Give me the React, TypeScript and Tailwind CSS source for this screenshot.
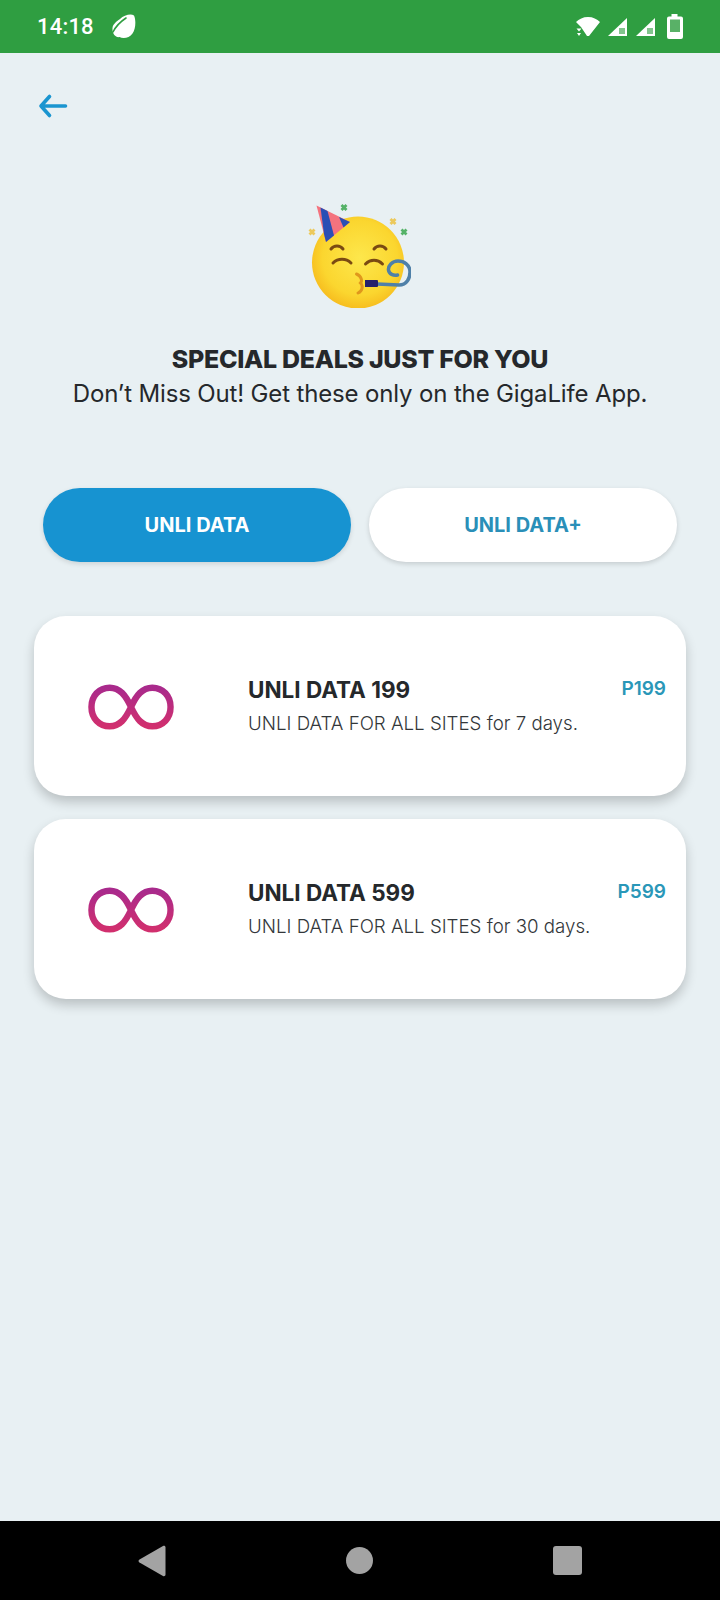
import React from "react";

const plans = [
  { name: "UNLI DATA 199", desc: "UNLI DATA FOR ALL SITES for 7 days.", price: "P199" },
  { name: "UNLI DATA 599", desc: "UNLI DATA FOR ALL SITES for 30 days.", price: "P599" },
];

function StatusBar() {
  return (
    <div className="h-[53px] bg-[#2f9e41] flex items-center justify-between pl-[37px] pr-[36px] text-white">
      <div className="flex items-center gap-[18px]">
        <span className="text-[22px] font-medium font-['Roboto',sans-serif] tracking-[0.2px]">14:18</span>
        <svg width="24" height="25" viewBox="0 0 24 25">
          <path d="M8 5C12 1 19-.5 22 1.500c2 4 2 13-1.500 18C17.500 24 11 25 7.500 23 4 24 0 20 .5 14 1 10 4 8 8 5Z" fill="white" />
          <path d="M1 18C4 12 8 8 14 4" fill="none" stroke="#2f9e41" strokeWidth="1.600" strokeLinecap="round" />
        </svg>
      </div>
      <div className="flex items-center gap-[7px]">
        <svg width="24" height="20" viewBox="0 0 24 20" fill="white">
          <path d="M0 5C3 2 7 0 12 0s9 2 12 5L13 19h-2l-2-3-4-6Z" />
          <path d="M0 11h6l-3 3.500ZM.5 15h5l-2.500 4Z" fill="#2f9e41" />
          <path d="M.5 11.500h5L3 14.500ZM1 16h4l-2 3Z" />
        </svg>
        <svg width="21" height="20" viewBox="0 0 21 20">
          <path d="M20 1v18H1Z" fill="white" />
          <path d="M12 11h6v6h-6Z" fill="#2f9e41" opacity=".6" />
        </svg>
        <svg width="21" height="20" viewBox="0 0 21 20">
          <path d="M20 1v18H1Z" fill="white" />
          <path d="M12 11h6v6h-6Z" fill="#2f9e41" opacity=".6" />
        </svg>
        <svg width="18" height="25" viewBox="0 0 18 25" className="ml-[3px]">
          <path d="M5.500 0h6v2.500H15a2 2 0 0 1 2 2V23a2 2 0 0 1-2 2H3a2 2 0 0 1-2-2V4.500a2 2 0 0 1 2-2h2.500Z" fill="white" />
          <path d="M4 5.500h10V18H4Z" fill="#2f9e41" opacity=".8" />
        </svg>
      </div>
    </div>
  );
}

function PartyFace() {
  return (
    <svg width="106" height="108" viewBox="0 0 106 108">
      <defs>
        <radialGradient id="faceFill" cx="52%" cy="45%" r="58%">
          <stop offset="0%" stopColor="#fde74c" />
          <stop offset="70%" stopColor="#fbd62f" />
          <stop offset="100%" stopColor="#f6b91c" />
        </radialGradient>
      </defs>
      <circle cx="53" cy="62.500" r="46" fill="url(#faceFill)" />
      {/* hat */}
      <path d="M11.500 5.500 45 22 21 42Z" fill="#f4737e" />
      <path d="M15.500 7.500 22.500 11 29 35.500 21 42 19 34Z" fill="#2a4fb5" />
      <path d="M34 17 45 22 38.500 27.500Z" fill="#2a4fb5" />
      {/* confetti */}
      <g fill="none" strokeWidth="2.800">
        <path d="M36.500 5l5 5M41.500 5l-5 5" stroke="#54b267" />
        <path d="M4.500 29.500l5 5M9.500 29.500l-5 5" stroke="#ecc95c" />
        <path d="M85.500 19l5 5M90.500 19l-5 5" stroke="#ecc95c" />
        <path d="M96.500 29.500l5 5M101.500 29.500l-5 5" stroke="#54b267" />
      </g>
      {/* eyes */}
      <g fill="none" stroke="#7a4a12" strokeWidth="3" strokeLinecap="round">
        <path d="M26 49c3-4 9-4 12 0" />
        <path d="M28 63c5-5 13-5 18 0" />
        <path d="M69 49c3-4 9-4 12 0" />
        <path d="M60.500 64c5-5 12-5 17 0" />
      </g>
      <path d="M51.500 74c5 2 6 7 4 9 3 3 2 8-2.500 10" fill="none" stroke="#e0971c" strokeWidth="3" strokeLinecap="round" />
      {/* blower */}
      <path d="M72 84 94 85c8 0 11-7 11-13 0-7-6-11-12-11-6 0-10 5-9.500 9 .5 4 5 6 9 5" fill="none" stroke="#4f80a8" strokeWidth="3.500" strokeLinecap="round" />
      <path d="M60 80h12a1 1 0 0 1 1 1v5a1 1 0 0 1-1 1H60Z" fill="#26216b" />
    </svg>
  );
}

function Infinity8() {
  return (
    <svg width="87" height="46" viewBox="0 0 88 46" fill="none">
      <defs>
        <linearGradient id="loopStroke" x1="0" y1="0" x2="0" y2="1">
          <stop offset="0%" stopColor="#a92a8c" />
          <stop offset="100%" stopColor="#d12f6e" />
        </linearGradient>
      </defs>
      <path
        d="M43.500 23C38 11 32 3.500 22 3.500 11 3.500 3.500 12 3.500 23S11 42.500 22 42.500c10 0 16-7.500 21.500-19.500C49 11 55 3.500 65 3.500c11 0 18.500 8.500 18.500 19.500S76 42.500 65 42.500c-10 0-16-7.500-21.500-19.500Z"
        stroke="url(#loopStroke)"
        strokeWidth="6.500"
      />
    </svg>
  );
}

export default function App() {
  return (
    <div className="w-[720px] h-[1600px] flex flex-col bg-[#e8f0f3] font-['Inter',sans-serif]">
      <StatusBar />

      <div className="flex-1 flex flex-col">
        <div className="pl-[38px] pt-[40px]">
          <svg width="30" height="26" viewBox="0 0 30 26" fill="none" stroke="#1a95d0" strokeWidth="3.600" strokeLinecap="round" strokeLinejoin="round">
            <path d="M27.500 13H3M11.500 3.500 3 13l8.500 9.500" />
          </svg>
        </div>

        <div className="flex justify-center mt-[81px] pr-[4px]">
          <PartyFace />
        </div>

        <h1 className="mt-[34px] text-center text-[25px] leading-[34px] font-extrabold text-[#25282b] tracking-[-0.3px]">
          SPECIAL DEALS JUST FOR YOU
        </h1>
        <p className="mt-[1px] text-center text-[24px] leading-[34px] text-[#25282b] tracking-[-0.15px]">
          Don’t Miss Out! Get these only on the GigaLife App.
        </p>

        <div className="mt-[77px] px-[43px] flex gap-[18px]">
          <button className="flex-1 h-[74px] rounded-full bg-[#1793d1] text-white text-[20px] font-bold shadow-[0_2px_5px_rgba(0,0,0,0.12)]">
            UNLI DATA
          </button>
          <button className="flex-1 h-[74px] rounded-full bg-white text-[#2a8fb8] text-[20px] font-bold shadow-[0_2px_5px_rgba(0,0,0,0.15)]">
            UNLI DATA+
          </button>
        </div>

        <div className="mt-[54px] px-[34px] flex flex-col gap-[23px]">
          {plans.map((plan) => (
            <div
              key={plan.name}
              className="h-[180px] rounded-[32px] bg-white shadow-[0_6px_12px_rgba(0,0,0,0.2)] flex items-center pl-[54px] pr-[20px]"
            >
              <div className="mt-[1px]">
                <Infinity8 />
              </div>
              <div className="ml-[73px] flex-1 min-w-0">
                <div className="text-[22.500px] leading-[30px] font-bold text-[#25282b]">{plan.name}</div>
                <div className="mt-[5px] text-[18.700px] leading-[28px] font-light text-[#33373a] whitespace-nowrap">{plan.desc}</div>
              </div>
              <div className="self-start mt-[59px] text-[19px] font-semibold text-[#2a97b8]">{plan.price}</div>
            </div>
          ))}
        </div>
      </div>

      <div className="h-[79px] bg-black flex items-center justify-between px-[138px]">
        <svg width="28" height="32" viewBox="0 0 28 32" fill="#a3a3a3">
          <path d="M25 1c1.200-.6 2.500 0 2.500 1.500v27c0 1.500-1.300 2.100-2.500 1.500L1.500 17.500c-1.300-.8-1.300-2.200 0-3Z" />
        </svg>
        <div className="w-[27px] h-[27px] rounded-full bg-[#a3a3a3]" />
        <div className="w-[29px] h-[29px] rounded-[3px] bg-[#a3a3a3]" />
      </div>
    </div>
  );
}
